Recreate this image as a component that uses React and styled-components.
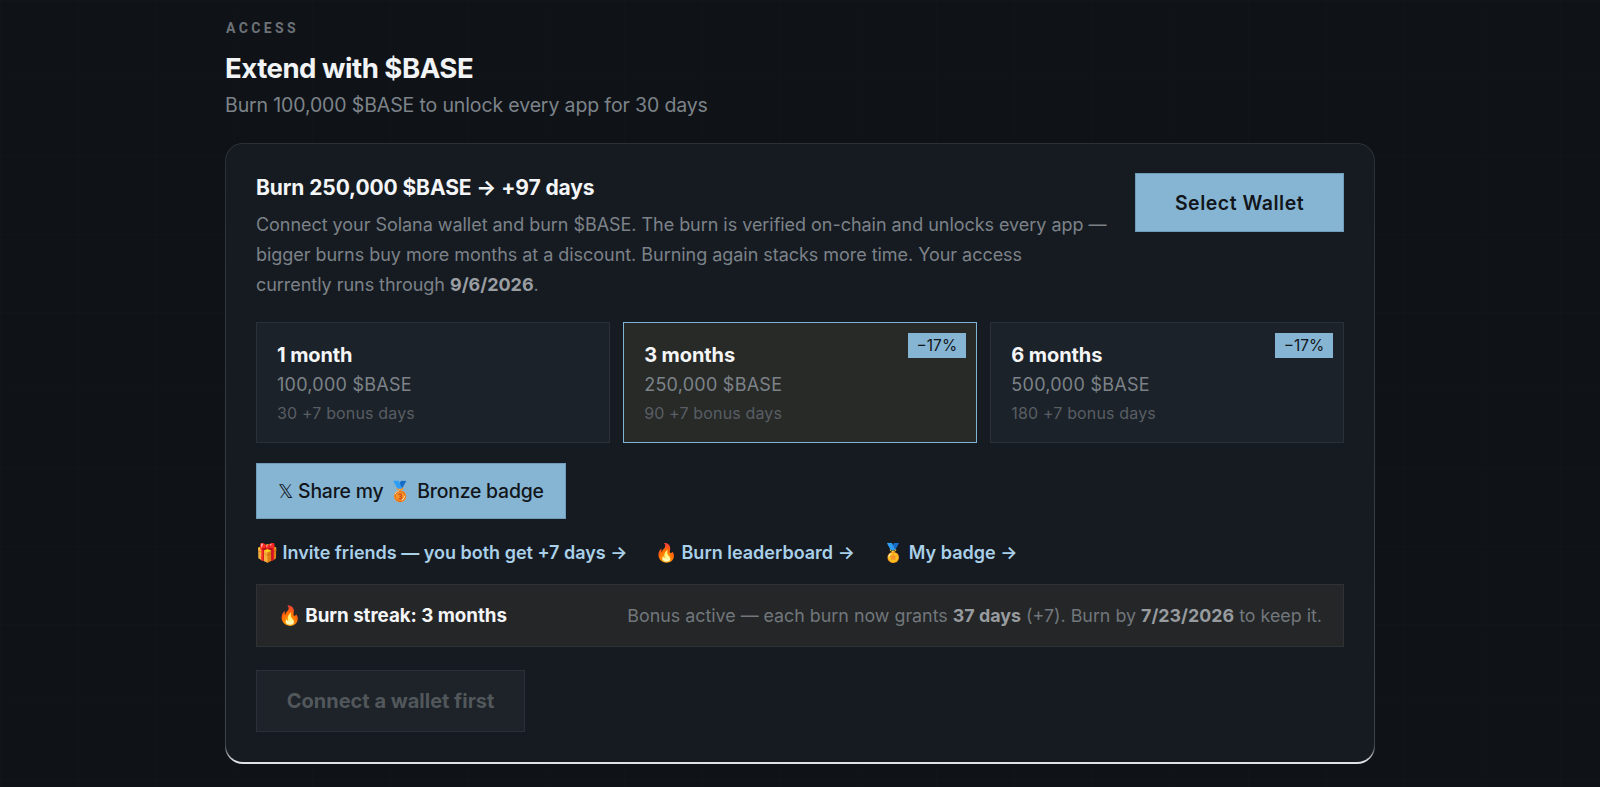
import React from 'react';
import styled, { createGlobalStyle } from 'styled-components';

const GlobalStyle = createGlobalStyle`
  html, body { margin: 0; padding: 0; height: 100%; overflow: hidden; }
  body {
    background: #0f1318;
    font-family: Inter, "Noto Sans", sans-serif;
    -webkit-font-smoothing: antialiased;
  }
  * { box-sizing: border-box; }
`;

const plans = [
  { name: '1 month', amount: '100,000 $BASE', bonus: '30 +7 bonus days' },
  { name: '3 months', amount: '250,000 $BASE', bonus: '90 +7 bonus days', off: '−17%', selected: true },
  { name: '6 months', amount: '500,000 $BASE', bonus: '180 +7 bonus days', off: '−17%' },
];

const Page = styled.div`
  height: 787px;
  padding-top: 19px;
  overflow: hidden;
  background-color: #0f1318;
  background-image: linear-gradient(90deg, rgba(255, 255, 255, 0.008) 1px, transparent 1px),
    linear-gradient(rgba(255, 255, 255, 0.006) 1px, transparent 1px);
  background-size: 78px 78px;
`;

const Section = styled.section`
  width: 1150px;
  margin: 0 auto;
`;

const Eyebrow = styled.div`
  font-family: "Roboto", sans-serif;
  font-size: 14px;
  line-height: 18px;
  font-weight: 700;
  letter-spacing: 3.4px;
  color: #6c7177;
  padding-left: 1px;
`;

const Title = styled.h2`
  margin: 13px 0 0;
  font-size: 27.6px;
  line-height: 36px;
  font-weight: 700;
  letter-spacing: -0.5px;
  color: #f1f3f5;
`;

const Subtitle = styled.p`
  margin: 5px 0 0;
  font-size: 19.5px;
  line-height: 28px;
  font-weight: 400;
  letter-spacing: -0.13px;
  color: #7d8389;
`;

const Card = styled.div`
  margin-top: 24px;
  height: 621px;
  padding: 29px 30px 0;
  border: 1.5px solid transparent;
  border-bottom-width: 2px;
  border-radius: 18px;
  background: linear-gradient(#161b22, #161b22) padding-box,
    linear-gradient(180deg, #2a3037 0%, #3d444a 97%, #dfe2e4 99.6%) border-box;
`;

const Head = styled.div`
  display: flex;
  justify-content: space-between;
  align-items: flex-start;
`;

const HeadText = styled.div`
  width: 870px;
`;

const CardTitle = styled.div`
  font-size: 21px;
  line-height: 30px;
  font-weight: 700;
  letter-spacing: -0.1px;
  color: #f4f5f6;
`;

const Desc = styled.p`
  margin: 7px 0 0;
  font-size: 18px;
  line-height: 30px;
  letter-spacing: -0.04px;
  color: #7c8288;

  strong {
    font-weight: 700;
    color: #9a9ea3;
  }
`;

const Button = styled.button`
  border: 1px solid #6f9cb8;
  border-radius: 0;
  background: #85b5d3;
  color: #12161b;
  font-family: inherit;
  padding: 0;
`;

const WalletButton = styled(Button)`
  width: 209px;
  height: 59px;
  font-size: 19.5px;
  font-weight: 600;
  letter-spacing: 0.5px;
`;

const Plans = styled.div`
  display: grid;
  grid-template-columns: repeat(3, 1fr);
  gap: 13.5px;
  margin-top: 22px;
`;

const Plan = styled.div`
  position: relative;
  height: 121px;
  padding: 18px 20px 0;
  border: 1px solid ${(p) => (p.$selected ? '#7fb4d6' : '#2a3037')};
  background: ${(p) => (p.$selected ? '#282a28' : '#1c2229')};
`;

const PlanName = styled.div`
  font-size: 20px;
  line-height: 28px;
  font-weight: 700;
  letter-spacing: -0.1px;
  color: #f4f5f6;
`;

const PlanAmount = styled.div`
  font-size: 18px;
  line-height: 31px;
  letter-spacing: 0.25px;
  color: #7c8288;
`;

const PlanBonus = styled.div`
  font-size: 16px;
  line-height: 27px;
  letter-spacing: 0.15px;
  color: #585e64;
`;

const Off = styled.span`
  position: absolute;
  top: 10px;
  right: 10px;
  width: 58px;
  height: 25px;
  background: #85b5d3;
  color: #12161b;
  font-size: 15.5px;
  line-height: 25px;
  text-align: center;
`;

const ShareButton = styled(Button)`
  display: block;
  width: 310px;
  height: 56px;
  margin-top: 20px;
  font-size: 19.4px;
  font-weight: 500;
  letter-spacing: -0.2px;
`;

const Links = styled.div`
  display: flex;
  gap: 27.5px;
  margin-top: 20px;
  height: 26px;
  align-items: center;
`;

const LinkItem = styled.a`
  font-size: 18px;
  font-weight: 600;
  color: #a9d0e8;
  white-space: nowrap;
`;

const Streak = styled.div`
  display: flex;
  justify-content: space-between;
  align-items: center;
  height: 63px;
  margin-top: 19px;
  padding: 0 21px;
  border: 1px solid #2d3236;
  background: #242628;
`;

const StreakTitle = styled.div`
  font-size: 18.8px;
  font-weight: 700;
  letter-spacing: -0.05px;
  color: #f4f5f6;
`;

const StreakText = styled.div`
  font-size: 17.85px;
  color: #72777c;

  strong {
    font-weight: 700;
    color: #979b9f;
  }
`;

const ConnectButton = styled.button`
  display: block;
  width: 269px;
  height: 62px;
  margin-top: 23px;
  border: 1px solid #2a3037;
  border-radius: 0;
  background: #1d2329;
  color: #52575c;
  font-family: inherit;
  font-size: 20px;
  font-weight: 700;
  letter-spacing: 0;
`;

const App = () => {
  return (
    <Page>
      <GlobalStyle />
      <Section>
        <Eyebrow>ACCESS</Eyebrow>
        <Title>Extend with $BASE</Title>
        <Subtitle>Burn 100,000 $BASE to unlock every app for 30 days</Subtitle>
        <Card>
          <Head>
            <HeadText>
              <CardTitle>Burn 250,000 $BASE → +97 days</CardTitle>
              <Desc>
                Connect your Solana wallet and burn $BASE. The burn is verified on-chain and unlocks every app — bigger
                burns buy more months at a discount. Burning again stacks more time. Your access
                <br />
                currently runs through <strong>9/6/2026</strong>.
              </Desc>
            </HeadText>
            <WalletButton>Select Wallet</WalletButton>
          </Head>
          <Plans>
            {plans.map((plan) => (
              <Plan key={plan.name} $selected={plan.selected}>
                {plan.off && <Off>{plan.off}</Off>}
                <PlanName>{plan.name}</PlanName>
                <PlanAmount>{plan.amount}</PlanAmount>
                <PlanBonus>{plan.bonus}</PlanBonus>
              </Plan>
            ))}
          </Plans>
          <ShareButton>𝕏 Share my 🥉 Bronze badge</ShareButton>
          <Links>
            <LinkItem>🎁 Invite friends — you both get +7 days →</LinkItem>
            <LinkItem>🔥 Burn leaderboard →</LinkItem>
            <LinkItem>🏅 My badge →</LinkItem>
          </Links>
          <Streak>
            <StreakTitle>🔥 Burn streak: 3 months</StreakTitle>
            <StreakText>
              Bonus active — each burn now grants <strong>37 days</strong> (+7). Burn by <strong>7/23/2026</strong> to
              keep it.
            </StreakText>
          </Streak>
          <ConnectButton>Connect a wallet first</ConnectButton>
        </Card>
      </Section>
    </Page>
  );
};

export default App;
